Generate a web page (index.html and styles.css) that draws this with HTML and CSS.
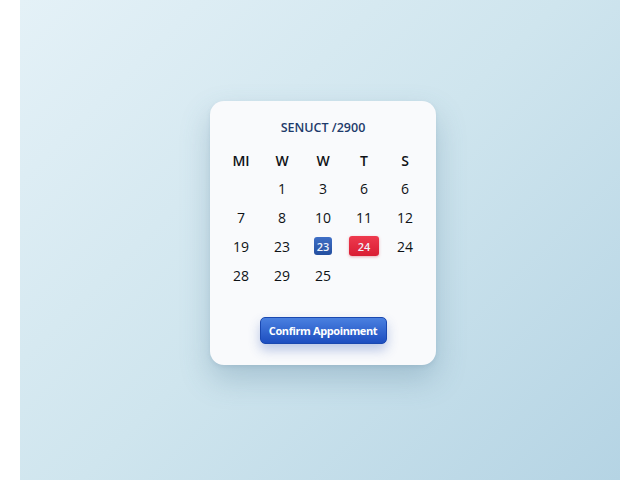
FILE: index.html
```html
<!DOCTYPE html>
<html>
<head>
    <title>Appointment</title>
    <link rel="stylesheet" href="styles.css">
</head>
<body>
    <div class="stage">
        <div class="card">
            <h2 class="month">SENUCT /2900</h2>
            <div class="days">
                <span class="head">MI</span>
                <span class="head">W</span>
                <span class="head">W</span>
                <span class="head">T</span>
                <span class="head">S</span>

                <span></span>
                <span>1</span>
                <span>3</span>
                <span>6</span>
                <span>6</span>

                <span>7</span>
                <span>8</span>
                <span>10</span>
                <span>11</span>
                <span>12</span>

                <span>19</span>
                <span>23</span>
                <span><b class="pick blue">23</b></span>
                <span><b class="pick red">24</b></span>
                <span>24</span>

                <span>28</span>
                <span>29</span>
                <span>25</span>
                <span></span>
                <span></span>
            </div>
            <button class="confirm">Confirm Appoinment</button>
        </div>
    </div>
</body>
</html>
```

FILE: styles.css
```css
body {
    margin: 0;
    background: #ffffff;
    font-family: "Open Sans", "Noto Sans", sans-serif;
}

.stage {
    margin: 0 20px;
    height: 480px;
    box-sizing: border-box;
    padding: 0 0 15px 6px;
    display: flex;
    align-items: center;
    justify-content: center;
    background: linear-gradient(135deg, #e4f1f7 0%, #cfe5ee 50%, #b5d4e4 100%);
}

.card {
    width: 226px;
    box-sizing: border-box;
    padding: 18px 10px 21px 10px;
    background: #f9fafc;
    border-radius: 14px;
    box-shadow: 0 14px 30px rgba(70, 110, 140, 0.28), 0 2px 4px rgba(70, 110, 140, 0.12);
    display: flex;
    flex-direction: column;
    align-items: center;
}

.month {
    margin: 0;
    font-size: 12.5px;
    line-height: 18px;
    font-weight: 600;
    color: #1e3a6b;
}

.days {
    margin-top: 9px;
    display: grid;
    grid-template-columns: repeat(5, 41px);
    grid-template-rows: 29px 28px 29px 29px 29px;
}

.days span {
    display: flex;
    align-items: center;
    justify-content: center;
    font-size: 14px;
    color: #0e1216;
}

.days .head {
    font-weight: 600;
}

.pick {
    display: flex;
    align-items: center;
    justify-content: center;
    font-size: 11px;
    font-weight: 600;
    color: #eef2fa;
    border-radius: 3px;
}

.blue {
    width: 18px;
    height: 18px;
    background: linear-gradient(#3f6fc6, #234e9f);
}

.red {
    width: 30px;
    height: 20px;
    background: linear-gradient(#ee3a4e, #d91c33);
    box-shadow: 0 1px 3px rgba(200, 30, 50, 0.35);
}

.confirm {
    margin-top: 27px;
    width: 127px;
    height: 27px;
    border: 1px solid #1a48b0;
    border-radius: 5px;
    background: linear-gradient(#4a80e0, #1d4ec0);
    color: #ffffff;
    font-family: "Open Sans", "Noto Sans", sans-serif;
    font-size: 11px;
    font-weight: 700;
    letter-spacing: -0.4px;
    box-shadow: 0 6px 12px rgba(40, 80, 180, 0.3);
}
```
